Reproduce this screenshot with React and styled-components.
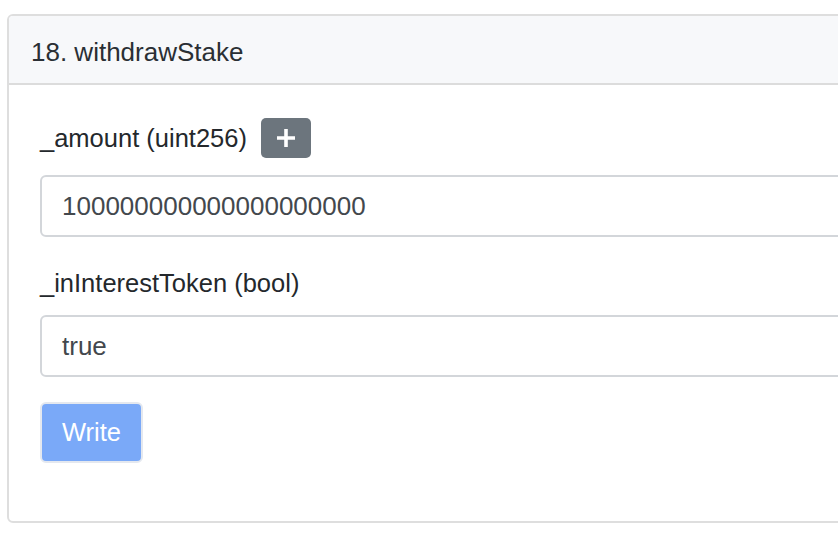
import React from "react";
import styled, { createGlobalStyle } from "styled-components";

const Global = createGlobalStyle`
  html, body { margin: 0; padding: 0; background: #fff; overflow: hidden; }
  body { font-family: "Liberation Sans", Arial, sans-serif; color: #212529; }
`;

const Viewport = styled.div`
  width: 838px;
  height: 534px;
  overflow: hidden;
`;

const Page = styled.div`
  padding: 14px 0 0 7px;
`;

const Card = styled.div`
  width: 880px;
  border: 2px solid #dedede;
  border-radius: 6px;
  background: #fff;
  overflow: hidden;
`;

const CardHeader = styled.div`
  height: 69px;
  box-sizing: border-box;
  background: #f7f8fa;
  border-bottom: 2px solid #dcdcdc;
  display: flex;
  align-items: center;
  padding: 5px 0 0 22px;
  font-size: 26px;
  color: #2a2f34;
`;

const CardBody = styled.div`
  padding: 33px 31px 58px;
`;

const Group = styled.div`
  margin-bottom: ${(p) => p.$mb || 0}px;
`;

const LabelRow = styled.div`
  display: flex;
  align-items: center;
  gap: 14px;
  height: ${(p) => p.$h}px;
  margin-bottom: ${(p) => p.$mb}px;
  font-size: 25.5px;
  color: #24282c;
`;

const IconButton = styled.button`
  width: 50px;
  height: 40px;
  border: none;
  border-radius: 5px;
  background: #6c757d;
  display: flex;
  align-items: center;
  justify-content: center;
  padding: 0;
`;

const Input = styled.div`
  height: 62px;
  box-sizing: border-box;
  border: 2px solid #d3d6da;
  border-radius: 6px;
  display: flex;
  align-items: center;
  padding-left: 20px;
  font-size: 26px;
  color: #43484d;
`;

const WriteButton = styled.button`
  width: 103px;
  height: 61px;
  box-sizing: border-box;
  border: 2px solid #e4e8ef;
  border-radius: 6px;
  background: #7aa9f8;
  color: #fff;
  font-family: "Liberation Sans", Arial, sans-serif;
  font-size: 25.5px;
  padding: 0;
`;

export default function App() {
  return (
    <Viewport>
      <Global />
      <Page>
        <Card>
          <CardHeader>18. withdrawStake</CardHeader>
          <CardBody>
            <Group $mb={29}>
              <LabelRow $h={40} $mb={17}>
                <span>_amount (uint256)</span>
                <IconButton aria-label="add">
                  <svg width="20" height="20" viewBox="0 0 20 20">
                    <path d="M10 1v18M1 10h18" stroke="#fff" strokeWidth="3.6" strokeLinecap="butt" />
                  </svg>
                </IconButton>
              </LabelRow>
              <Input>100000000000000000000</Input>
            </Group>
            <Group $mb={25}>
              <LabelRow $h={34} $mb={15}>
                <span>_inInterestToken (bool)</span>
              </LabelRow>
              <Input>true</Input>
            </Group>
            <WriteButton>Write</WriteButton>
          </CardBody>
        </Card>
      </Page>
    </Viewport>
  );
}
